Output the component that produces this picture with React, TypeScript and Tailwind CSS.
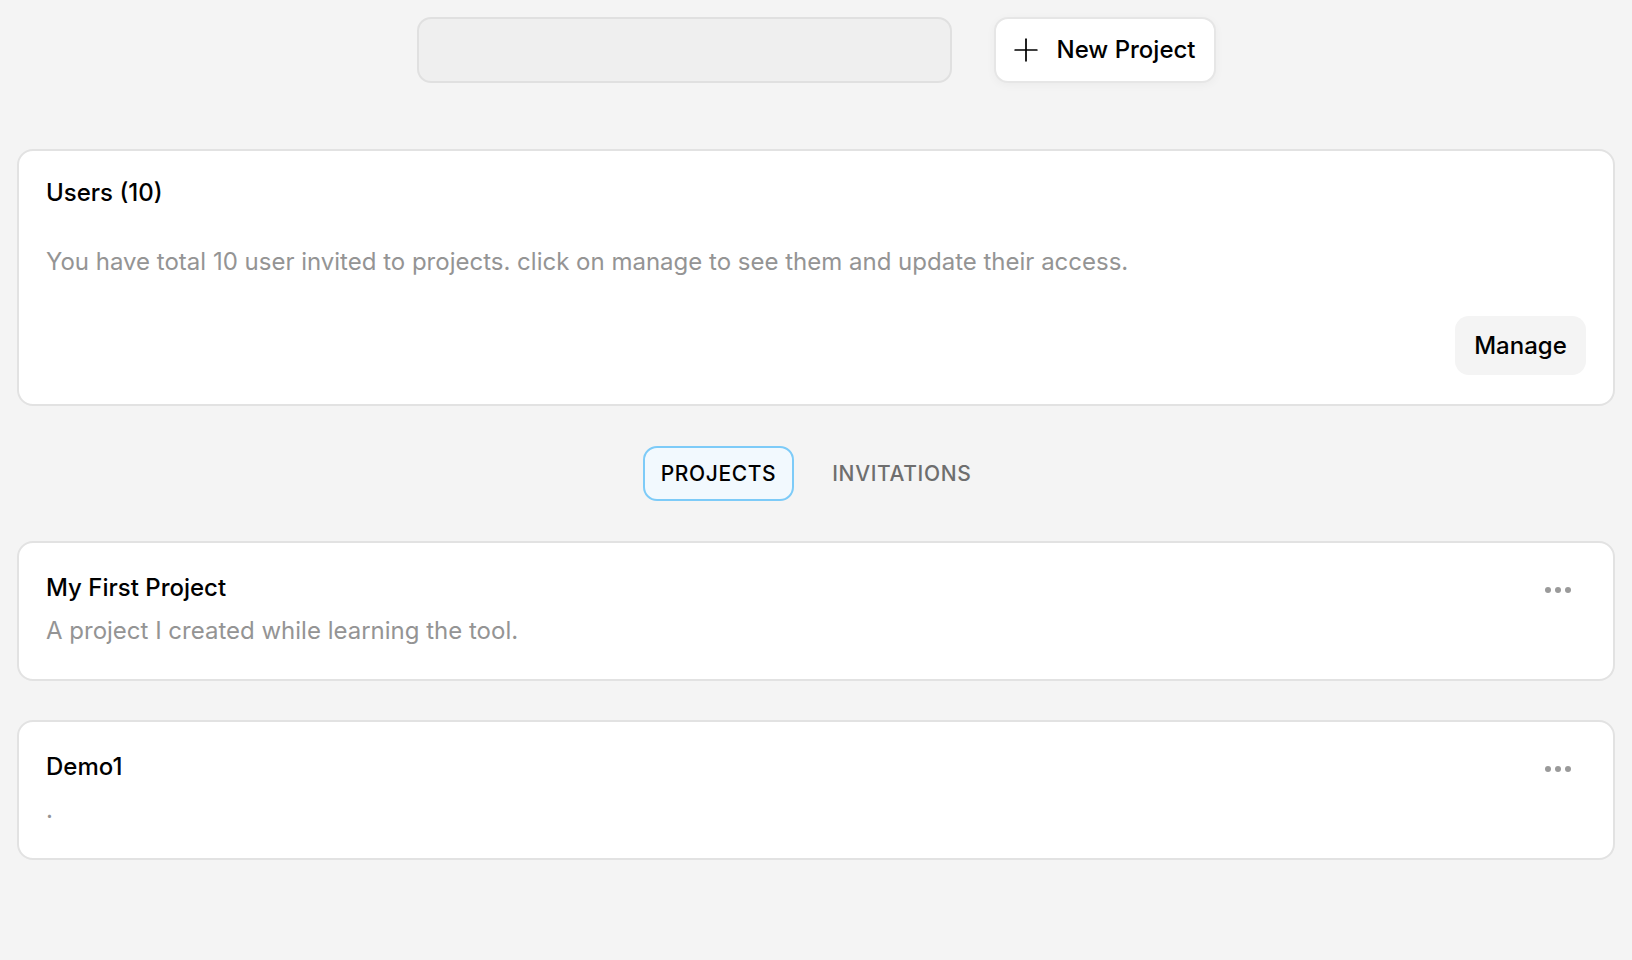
import { useState } from "react";

const projects = [
  { id: 1, name: "My First Project", description: "A project I created while learning the tool." },
  { id: 2, name: "Demo1", description: "." },
];

function PlusIcon() {
  return (
    <svg width="26" height="26" viewBox="0 0 24 24" fill="none" stroke="currentColor" strokeWidth="1.6" strokeLinecap="round" aria-hidden="true">
      <line x1="12" y1="2" x2="12" y2="22" />
      <line x1="2" y1="12" x2="22" y2="12" />
    </svg>
  );
}

function DotsIcon() {
  return (
    <svg width="28" height="8" viewBox="0 0 28 8" fill="#9a9a9a" aria-hidden="true">
      <circle cx="4" cy="4" r="3" />
      <circle cx="14" cy="4" r="3" />
      <circle cx="24" cy="4" r="3" />
    </svg>
  );
}

function ProjectCard({ name, description }: { name: string; description: string }) {
  return (
    <div className="flex items-start justify-between rounded-2xl border-2 border-[#e2e2e2] bg-white px-[27px] pb-[32px] pt-[29px]">
      <div className="flex flex-col gap-[11px]">
        <div className="text-[24px] font-medium leading-[32px] text-black">{name}</div>
        <div className="text-[24px] leading-[32px] text-[#949494]">{description}</div>
      </div>
      <button type="button" aria-label="More" className="mt-[13px] mr-[14px] flex h-[10px] items-center">
        <DotsIcon />
      </button>
    </div>
  );
}

export default function App() {
  const [tab, setTab] = useState<"projects" | "invitations">("projects");

  return (
    <div className="min-h-screen bg-[#f4f4f4] px-[17px] pt-[17px] font-['Inter',sans-serif]">
      <div className="flex items-center justify-center gap-[42px]">
        <div className="h-[66px] w-[535px] rounded-[14px] border-2 border-[#e0e0e0] bg-[#efefef]" />
        <button
          type="button"
          className="flex h-[66px] w-[222px] items-center justify-center gap-[17px] rounded-[14px] border-2 border-[#e6e6e6] bg-white text-[24px] font-medium text-black shadow-[0_2px_10px_rgba(0,0,0,0.04)]"
        >
          <PlusIcon />
          New Project
        </button>
      </div>

      <div className="mt-[66px] rounded-2xl border-2 border-[#e2e2e2] bg-white px-[27px] pb-[29px] pt-[26px]">
        <div className="text-[24px] font-medium leading-[32px] text-black">Users (10)</div>
        <p className="mt-[37px] text-[24px] leading-[32px] text-[#949494]">
          You have total 10 user invited to projects. click on manage to see them and update their access.
        </p>
        <div className="mt-[38px] flex justify-end">
          <button type="button" className="h-[59px] w-[131px] rounded-[14px] bg-[#f4f4f4] text-[24px] font-medium text-black">
            Manage
          </button>
        </div>
      </div>

      <div className="mt-[40px] flex justify-center gap-[20px]">
        <button
          type="button"
          onClick={() => setTab("projects")}
          className={`h-[55px] rounded-[14px] border-2 px-[16px] text-[21px] font-medium tracking-[0.03em] ${
            tab === "projects" ? "border-[#7dcbf8] bg-[#f2f9fe] text-black" : "border-transparent text-[#6e6e6e]"
          }`}
        >
          PROJECTS
        </button>
        <button
          type="button"
          onClick={() => setTab("invitations")}
          className={`h-[55px] rounded-[14px] border-2 px-[16px] text-[21px] font-medium tracking-[0.03em] ${
            tab === "invitations" ? "border-[#7dcbf8] bg-[#f2f9fe] text-black" : "border-transparent text-[#6e6e6e]"
          }`}
        >
          INVITATIONS
        </button>
      </div>

      <div className="mt-[40px] flex flex-col gap-[39px]">
        {projects.map((p) => (
          <ProjectCard key={p.id} name={p.name} description={p.description} />
        ))}
      </div>
    </div>
  );
}
